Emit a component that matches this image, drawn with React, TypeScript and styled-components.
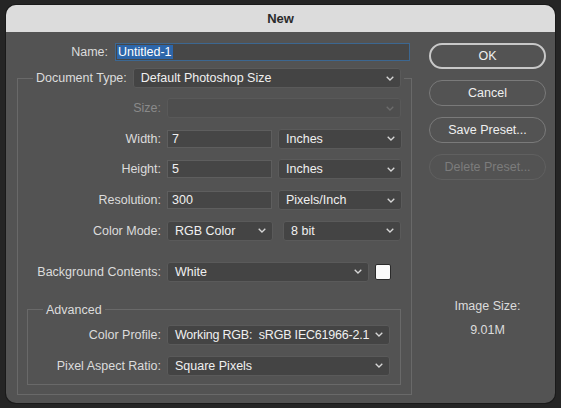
import styled, { createGlobalStyle } from "styled-components";

const GlobalStyle = createGlobalStyle`
  html, body {
    margin: 0;
    padding: 0;
    background: #252525;
  }
  body {
    font-family: "Liberation Sans", Arial, sans-serif;
    font-size: 12.5px;
    -webkit-font-smoothing: antialiased;
  }
  * {
    box-sizing: border-box;
  }
`;

const Screen = styled.div`
  width: 561px;
  height: 408px;
  padding: 5px 6px 0 6px;
  background: #252525;
`;

const Window = styled.div`
  width: 549px;
  height: 398px;
  background: #535353;
  border-radius: 10px;
  overflow: hidden;
  box-shadow: 0 0 0 1px #1a1a1a;
  display: flex;
  flex-direction: column;
`;

const TitleBar = styled.div`
  height: 27px;
  flex: none;
  background: #dcdcdc;
  color: #2b2b2b;
  font-weight: bold;
  font-size: 13px;
  display: flex;
  align-items: center;
  justify-content: center;
`;

const Body = styled.div`
  display: grid;
  grid-template-columns: 395px 117px;
  column-gap: 17px;
  padding: 11px 9px 0 11px;
`;

const FormColumn = styled.div`
  display: flex;
  flex-direction: column;
`;

const Row = styled.div<{ $gap?: number; $top?: number }>`
  display: flex;
  align-items: center;
  gap: ${(p) => p.$gap ?? 6}px;
  margin-top: ${(p) => p.$top ?? 0}px;
`;

const Label = styled.span<{ $width?: number; $disabled?: boolean }>`
  width: ${(p) => (p.$width ? `${p.$width}px` : "auto")};
  flex: none;
  text-align: right;
  white-space: nowrap;
  color: ${(p) => (p.$disabled ? "#8a8a8a" : "#dcdcdc")};
`;

const NameInput = styled.div`
  flex: 1;
  margin-right: 2px;
  height: 18px;
  border: 1px solid #3c6791;
  background: #474747;
  padding-left: 1px;
  display: flex;
  align-items: center;
`;

const Selected = styled.span`
  background: #2d66aa;
  color: #ffffff;
  padding: 0 1px;
  line-height: 14px;
`;

const TextInput = styled.div<{ $width: number }>`
  width: ${(p) => p.$width}px;
  height: 18px;
  flex: none;
  background: #464646;
  border: 1px solid #5e5e5e;
  color: #f0f0f0;
  padding-left: 4px;
  display: flex;
  align-items: center;
`;

const ControlPair = styled.div`
  display: flex;
  align-items: center;
  gap: 10px;
`;

const SelectBox = styled.div<{ $width: number; $disabled?: boolean; $tight?: boolean }>`
  width: ${(p) => p.$width}px;
  height: 20px;
  flex: none;
  background: ${(p) => (p.$disabled ? "#4e4e4e" : "#444444")};
  border: 1px solid ${(p) => (p.$disabled ? "#595959" : "#5a5a5a")};
  border-radius: 3px;
  color: #f0f0f0;
  padding: 0 6px 0 7px;
  display: flex;
  align-items: center;
  justify-content: space-between;
  gap: 4px;
  white-space: pre;
  letter-spacing: ${(p) => (p.$tight ? "-0.2px" : "normal")};
`;

const Chevron = styled.svg<{ $disabled?: boolean }>`
  flex: none;
  stroke: ${(p) => (p.$disabled ? "#6c6c6c" : "#d6d6d6")};
`;

const Group = styled.fieldset<{ $ml?: number; $mt?: number; $pt: number; $pr: number; $pb: number }>`
  margin: ${(p) => p.$mt ?? 0}px 0 0 ${(p) => p.$ml ?? 0}px;
  border: 1px solid #696969;
  padding: ${(p) => p.$pt}px ${(p) => p.$pr}px ${(p) => p.$pb}px 0;
  min-width: 0;
`;

const Legend = styled.legend`
  margin-left: 15px;
  padding: 0 3px;
  color: #dcdcdc;
  line-height: 16px;
`;

const LegendInner = styled.div`
  display: flex;
  align-items: center;
  gap: 6px;
`;

const Stack = styled.div<{ $gap: number }>`
  display: flex;
  flex-direction: column;
  gap: ${(p) => p.$gap}px;
`;

const Swatch = styled.div`
  width: 16px;
  height: 16px;
  flex: none;
  background: #fafafa;
  border: 1px solid #2a2a2a;
  border-radius: 2px;
`;

const SideColumn = styled.div`
  display: flex;
  flex-direction: column;
`;

const ButtonStack = styled.div`
  display: flex;
  flex-direction: column;
  gap: 11px;
`;

const Button = styled.button<{ $primary?: boolean }>`
  height: 26px;
  border-radius: 13px;
  border: ${(p) => (p.$primary ? "2px solid #c8c8c8" : "1px solid #7a7a7a")};
  background: transparent;
  color: #efefef;
  font-family: inherit;
  font-size: 12.5px;
  padding: 0;
  &:disabled {
    border-color: #606060;
    color: #7c7c7c;
  }
`;

const InfoLabel = styled.div<{ $top: number }>`
  margin-top: ${(p) => p.$top}px;
  text-align: center;
  color: #dcdcdc;
  line-height: 16px;
`;

function Select({
  width,
  value,
  disabled,
  tight,
}: {
  width: number;
  value?: string;
  disabled?: boolean;
  tight?: boolean;
}) {
  return (
    <SelectBox $width={width} $disabled={disabled} $tight={tight}>
      <span>{value}</span>
      <Chevron $disabled={disabled} width="8" height="5" viewBox="0 0 8 5" fill="none" strokeWidth="1.3">
        <polyline points="0.7,0.7 4,4 7.3,0.7" />
      </Chevron>
    </SelectBox>
  );
}

export default function App() {
  return (
    <>
      <GlobalStyle />
      <Screen>
        <Window>
          <TitleBar>New</TitleBar>
          <Body>
            <FormColumn>
              <Row $gap={7}>
                <Label $width={91}>Name:</Label>
                <NameInput>
                  <Selected>Untitled-1</Selected>
                </NameInput>
              </Row>

              <Group $mt={7} $pt={10} $pr={10} $pb={9}>
                <Legend>
                  <LegendInner>
                    <Label>Document Type:</Label>
                    <Select width={268} value="Default Photoshop Size" />
                  </LegendInner>
                </Legend>

                <Stack $gap={10.7}>
                  <Row>
                    <Label $width={143} $disabled>
                      Size:
                    </Label>
                    <Select width={234} disabled />
                  </Row>
                  <Row>
                    <Label $width={143}>Width:</Label>
                    <TextInput $width={105}>7</TextInput>
                    <Select width={124} value="Inches" />
                  </Row>
                  <Row>
                    <Label $width={143}>Height:</Label>
                    <TextInput $width={105}>5</TextInput>
                    <Select width={124} value="Inches" />
                  </Row>
                  <Row>
                    <Label $width={143}>Resolution:</Label>
                    <TextInput $width={105}>300</TextInput>
                    <Select width={124} value="Pixels/Inch" />
                  </Row>
                  <Row>
                    <Label $width={143}>Color Mode:</Label>
                    <ControlPair>
                      <Select width={106} value="RGB Color" />
                      <Select width={118} value="8 bit" />
                    </ControlPair>
                  </Row>
                </Stack>

                <Row $top={21}>
                  <Label $width={143}>Background Contents:</Label>
                  <Select width={202} value="White" />
                  <Swatch />
                </Row>

                <Group $ml={9} $mt={20} $pt={7} $pr={10} $pb={8}>
                  <Legend>Advanced</Legend>
                  <Stack $gap={11}>
                    <Row>
                      <Label $width={133}>Color Profile:</Label>
                      <Select width={223} value="Working RGB:  sRGB IEC61966-2.1" tight />
                    </Row>
                    <Row>
                      <Label $width={133}>Pixel Aspect Ratio:</Label>
                      <Select width={223} value="Square Pixels" />
                    </Row>
                  </Stack>
                </Group>
              </Group>
            </FormColumn>

            <SideColumn>
              <ButtonStack>
                <Button $primary>OK</Button>
                <Button>Cancel</Button>
                <Button>Save Preset...</Button>
                <Button disabled>Delete Preset...</Button>
              </ButtonStack>
              <InfoLabel $top={118}>Image Size:</InfoLabel>
              <InfoLabel $top={8}>9.01M</InfoLabel>
            </SideColumn>
          </Body>
        </Window>
      </Screen>
    </>
  );
}
